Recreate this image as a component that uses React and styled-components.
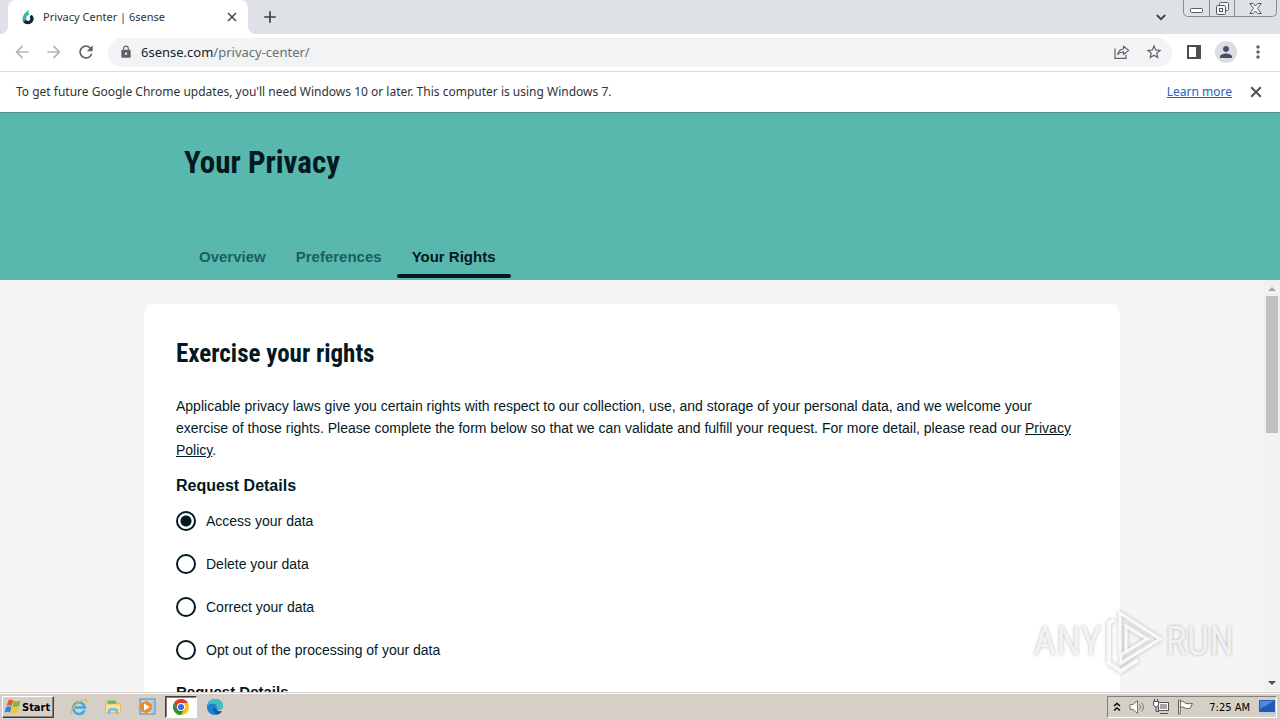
import React, { useState } from 'react';
import styled, { createGlobalStyle } from 'styled-components';
import {
    MdAdd,
    MdArrowBack,
    MdArrowForward,
    MdLock,
    MdMoreVert,
    MdPerson,
    MdRefresh,
    MdStarBorder
} from 'react-icons/md';

const UI_FONT = '"Noto Sans", "Open Sans", sans-serif';
const TASKBAR_FONT = '"DejaVu Sans Condensed", "DejaVu Sans", sans-serif';
const BODY_FONT = '"Liberation Sans", Arial, sans-serif';
const HEADING_FONT = '"Roboto Condensed", Roboto, sans-serif';

const TEAL = '#59b8ad';
const INK = '#03191f';
const CHROME_ICON = '#5f6368';
const CHROME_TEXT = '#303336';
const TASKBAR = '#d5cfc7';

const GlobalStyle = createGlobalStyle`
  *, *::before, *::after {
    box-sizing: border-box;
  }
  body {
    margin: 0;
    overflow: hidden;
  }
  button {
    padding: 0;
    border: none;
    background: none;
    font: inherit;
    color: inherit;
  }
  svg {
    display: block;
  }
`;

const Desktop = styled.div`
  position: relative;
  display: flex;
  flex-direction: column;
  height: 100vh;
  font-family: ${BODY_FONT};
  color: ${INK};
`;

/* Browser window */

const TabStrip = styled.div`
  display: flex;
  align-items: flex-start;
  flex: none;
  height: 34px;
  padding: 0 3px 0 8px;
  background: #dee1e6;
  font-family: ${UI_FONT};
`;

const BrowserTab = styled.div`
  position: relative;
  display: flex;
  align-items: center;
  gap: 8px;
  width: 240px;
  height: 34px;
  padding: 0 8px 0 13px;
  border-radius: 8px 8px 0 0;
  background: white;
  font-size: 11px;
  color: ${CHROME_TEXT};

  &::before,
  &::after {
    content: '';
    position: absolute;
    bottom: 0;
    width: 8px;
    height: 8px;
  }
  &::before {
    right: 100%;
    background: radial-gradient(circle at 0 0, transparent 8px, white 8px);
  }
  &::after {
    left: 100%;
    background: radial-gradient(circle at 100% 0, transparent 8px, white 8px);
  }
`;

const TabTitle = styled.span`
  flex: 1;
  padding-bottom: 2px;
`;

const IconButton = styled.button`
  display: flex;
  align-items: center;
  justify-content: center;
  flex: none;
  width: ${props => props.$width || 32}px;
  height: ${props => props.$height || 32}px;
  color: ${props => props.$color || CHROME_ICON};
`;

const StripSpacer = styled.div`
  flex: 1;
`;

const WindowControls = styled.div`
  display: flex;
  height: 17px;
  margin-left: 6px;
  border: 1px solid #888b92;
  border-top: none;
  border-radius: 0 0 5px 5px;

  button + button {
    border-left: 1px solid #888b92;
  }
`;

const Toolbar = styled.div`
  display: flex;
  align-items: center;
  flex: none;
  height: 38px;
  padding: 0 6px 1px;
  border-bottom: 1px solid #dadce0;
  background: white;
  font-family: ${UI_FONT};
`;

const Omnibox = styled.div`
  display: flex;
  align-items: center;
  flex: 1;
  height: 29px;
  margin: 0 6px;
  padding: 0 2px 0 11px;
  border-radius: 15px;
  background: #f1f3f4;
`;

const Address = styled.a`
  flex: 1;
  margin-left: 8px;
  font-size: 13px;
  color: #6a6e73;
  text-decoration: none;

  b {
    font-weight: 400;
    color: #202124;
  }
`;

const Avatar = styled.span`
  display: flex;
  align-items: center;
  justify-content: center;
  width: 22px;
  height: 22px;
  border-radius: 50%;
  background: #dadde2;
  color: #454e66;
`;

const InfoBar = styled.div`
  display: flex;
  align-items: center;
  flex: none;
  height: 41px;
  padding: 0 8px 0 16px;
  border-bottom: 1px solid #4f9188;
  background: white;
  font-family: ${UI_FONT};
  font-size: 12px;
  color: ${CHROME_TEXT};

  p {
    flex: 1;
    margin: 0;
    padding-bottom: 2px;
  }
  a {
    margin-right: 8px;
    padding-bottom: 2px;
    color: #2464c4;
  }
`;

/* Privacy center page */

const Header = styled.header`
  flex: none;
  padding: 30px 16px 2px;
  background: ${TEAL};
`;

const HeaderInner = styled.div`
  max-width: 912px;
  margin: 0 auto;
`;

const Title = styled.h1`
  margin: 0 0 64px;
  font-family: ${HEADING_FONT};
  font-size: 31px;
  line-height: 40px;
`;

const Tabs = styled.nav`
  display: flex;
`;

const PageTab = styled.button`
  padding: 0;
  font-size: 15px;
  font-weight: 700;
  line-height: 20px;
  color: ${props => props.$active ? INK : '#1b5f5c'};

  span {
    display: block;
    padding: 0 15px 7px;
  }
  &::after {
    content: '';
    display: block;
    height: 4px;
    border-radius: 2px;
    background: ${props => props.$active ? INK : 'transparent'};
  }
`;

const Viewport = styled.div`
  display: flex;
  flex: 1;
  min-height: 0;
`;

const Page = styled.main`
  flex: 1;
  min-width: 0;
  padding: 24px 16px 0;
  overflow: hidden;
  background: #f5f5f5;
`;

const Card = styled.section`
  max-width: 976px;
  margin: 0 auto;
  padding: 32px;
  border-radius: 10px;
  background: white;
`;

const CardTitle = styled.h2`
  margin: 0 0 23px;
  font-family: ${HEADING_FONT};
  font-size: 25px;
  line-height: 36px;
`;

const Intro = styled.p`
  margin: 0 0 15px;
  font-size: 14px;
  line-height: 22px;

  a {
    color: inherit;
  }
`;

const Options = styled.fieldset`
  display: flex;
  flex-direction: column;
  gap: 23px;
  margin: 0 0 22px;
  padding: 0;
  border: none;
`;

const SectionTitle = styled.legend`
  margin: 0 0 15px;
  padding: 0;
  font-size: ${props => props.$small ? 15 : 16}px;
  font-weight: 700;
  line-height: 20px;
`;

const Option = styled.label`
  display: flex;
  align-items: center;
  gap: 10px;
  font-size: 14px;
  line-height: 20px;
`;

const Radio = styled.input`
  flex: none;
  appearance: none;
  width: 20px;
  height: 20px;
  margin: 0;
  border: 2px solid ${INK};
  border-radius: 50%;
  background: ${props => props.checked ? `radial-gradient(circle, ${INK} 5px, white 6px)` : 'white'};
`;

const ScrollBar = styled.div`
  display: flex;
  flex-direction: column;
  flex: none;
  width: 16px;
  background: #f1f1f1;
`;

const ScrollTrack = styled.div`
  flex: 1;
  padding: 0 2px;
`;

const ScrollThumb = styled.div`
  height: 36%;
  background: #c1c1c1;
`;

const Watermark = styled.div`
  position: absolute;
  right: 46px;
  bottom: 46px;
  display: flex;
  align-items: center;
  gap: 2px;
  font-family: ${HEADING_FONT};
  font-size: 40px;
  color: rgba(255, 255, 255, 0.8);
  text-shadow: 0 0 3px rgba(0, 0, 0, 0.3);
  pointer-events: none;

  svg {
    filter: drop-shadow(0 0 2px rgba(0, 0, 0, 0.3));
  }
`;

/* Windows taskbar */

const Taskbar = styled.footer`
  display: flex;
  align-items: center;
  flex: none;
  height: 28px;
  padding: 1px 3px 0 2px;
  border-top: 1px solid #d5cfc7;
  box-shadow: inset 0 1px white;
  background: ${TASKBAR};
  font-family: ${TASKBAR_FONT};
  font-size: 12px;
  color: black;
`;

const StartButton = styled.button`
  display: flex;
  align-items: center;
  gap: 1px;
  height: 22px;
  margin-right: 8px;
  padding: 0 3px 0 1px;
  border: 1px solid;
  border-color: white #404040 #404040 white;
  box-shadow: inset -1px -1px #868078;
  font-weight: 700;
  font-size: 11px;
`;

const TaskButton = styled.button`
  display: flex;
  align-items: center;
  justify-content: center;
  width: ${props => props.$active ? 32 : 34}px;
  height: 22px;
  margin: ${props => props.$active ? '0 1px' : '0'};
  border: 1px solid transparent;
  ${props => props.$active && `
    border-color: #404040 white white #404040;
    box-shadow: inset 1px 1px #868078;
    background: white;
  `}
`;

const Tray = styled.div`
  display: flex;
  align-items: center;
  gap: 7px;
  height: 22px;
  padding: 0 1px 0 5px;
  border: 1px solid;
  border-color: #868078 white white #868078;
`;

const Clock = styled.time`
  margin: 0 2px 0 8px;
  font-size: 11px;
`;

const Favicon = () => (
    <svg width="14" height="16" viewBox="0 0 14 16" aria-hidden="true">
        <path d="M8.500 0.500C4 3 2 6 1.500 9.500C1.300 11 1.600 12.300 2.300 13.300L5.500 10.600C4.600 8.500 6 6.200 8.800 5.500C6.800 4.300 7.200 2.300 8.500 0.500Z" fill="#35b5a5" />
        <path d="M2.300 13.200C5 16.200 9.800 15.700 11.800 12.500C13.300 10 12.700 7.200 10.500 5.800L8.500 8C9.700 9 9.500 11.300 7.700 11.900C6.300 12.200 5.300 11.600 5 10.500Z" fill="#12213d" />
    </svg>
);

const ShareIcon = () => (
    <svg width="16" height="16" viewBox="0 0 16 16" fill="none" stroke={CHROME_ICON} strokeWidth="1.200" aria-hidden="true">
        <path d="M1 4.500V14.400H12V11" />
        <path d="M3.800 10.500C4.200 7 6.300 5.200 9.500 5V2.200L14.700 6.400L9.500 10.500V7.900C7 7.900 5.300 8.600 3.800 10.500Z" strokeLinejoin="round" />
    </svg>
);

const SidePanelIcon = () => (
    <svg width="14" height="14" viewBox="0 0 14 14" aria-hidden="true">
        <path fillRule="evenodd" d="M0 0H14V14H0ZM2 2V12H9V2Z" fill="#4b4e52" />
    </svg>
);

const ChevronIcon = () => (
    <svg width="10" height="7" viewBox="0 0 10 7" fill="none" stroke="#3c4043" strokeWidth="1.800" aria-hidden="true">
        <path d="M0.800 1L5 5.200L9.200 1" />
    </svg>
);

const MinimizeIcon = () => (
    <svg width="13" height="5" viewBox="0 0 13 5" aria-hidden="true">
        <rect x="0.500" y="0.500" width="12" height="4" rx="1" fill="white" stroke="#585c66" />
    </svg>
);

const RestoreIcon = () => (
    <svg width="13" height="13" viewBox="0 0 13 13" fill="#f4f5f7" stroke="#585c66" aria-hidden="true">
        <rect x="3.500" y="0.500" width="9" height="8" rx="1" />
        <rect x="0.500" y="3.500" width="9" height="9" rx="1" />
        <rect x="3.500" y="6.500" width="3" height="3" />
    </svg>
);

const WindowCloseIcon = () => (
    <svg width="13" height="11" viewBox="0 0 13 11" aria-hidden="true">
        <path d="M0.800 0.500H4.200L6.500 3L8.800 0.500H12.200L8.500 5.500L12.200 10.500H8.800L6.500 8L4.200 10.500H0.800L4.500 5.500Z" fill="#f4f5f7" stroke="#585c66" />
    </svg>
);

const CrossIcon = ({ size }) => (
    <svg width={size} height={size} viewBox="0 0 10 10" stroke="#4b4e52" strokeWidth="1.600" aria-hidden="true">
        <path d="M1 1L9 9M9 1L1 9" />
    </svg>
);

const ScrollArrow = ({ down }) => (
    <svg width="16" height="16" viewBox="0 0 16 16" aria-hidden="true">
        <path d={down ? 'M4 5H12L8 9Z' : 'M4 11H12L8 7Z'} fill={down ? '#505050' : '#a3a3a3'} />
    </svg>
);

const WindowsLogo = () => (
    <svg width="17" height="16" viewBox="0 0 17 16" aria-hidden="true">
        <path d="M4.500 1.200C6.300 0.200 7.800 0.500 9.300 1.400L7.800 7C6.200 6 4.500 5.900 2.600 6.900Z" fill="#ea5a28" />
        <path d="M10 1.800C12 2.800 14 2.700 16.600 1.300L15.100 7C12.800 8.200 10.600 8.400 8.500 7.400Z" fill="#7fb93a" />
        <path d="M2.200 7.900C4 7 5.800 7.200 7.500 8L6 13.600C4.300 12.700 2.500 12.500 0.500 13.500Z" fill="#2f86d6" />
        <path d="M8.300 8.400C10.400 9.400 12.600 9.300 14.800 8L13.400 13.700C11 15 8.800 15 6.800 14Z" fill="#f7c22d" />
    </svg>
);

const ExplorerLogo = () => (
    <svg width="18" height="18" viewBox="0 0 18 18" fill="none" aria-hidden="true">
        <path d="M14.500 12.200A5.800 5.800 0 1 1 14.800 9.500H5" stroke="#3fa9e3" strokeWidth="2.600" />
        <path d="M1.500 15.500C-0.500 12.500 6 5 12 2.300C16 0.700 17.500 2 16 5" stroke="#e9b93a" strokeWidth="1.300" />
    </svg>
);

const FolderLogo = () => (
    <svg width="18" height="18" viewBox="0 0 18 18" aria-hidden="true">
        <path d="M2 3H7L8 4.500H15V13H2Z" fill="#e8c565" />
        <path d="M4 2.500H12V6H4Z" fill="#72b56a" />
        <path d="M1.500 6H16.500V14.500H1.500Z" fill="#f8e39a" stroke="#d9b04d" strokeWidth="0.600" />
        <path d="M4 16V11.500C4 9.500 14 9.500 14 11.500V16H11.500V12.800H6.500V16Z" fill="#79bde9" />
    </svg>
);

const PlayerLogo = () => (
    <svg width="18" height="18" viewBox="0 0 18 18" aria-hidden="true">
        <rect x="2" y="1" width="15" height="15" fill="#a9cdec" stroke="#5c8cba" />
        <rect x="4" y="3" width="9" height="12" fill="#dcebf7" />
        <circle cx="8" cy="9" r="6" fill="#f28a1c" />
        <path d="M6 5.500L12 9L6 12.500Z" fill="white" />
    </svg>
);

const ChromeLogo = () => (
    <svg width="16" height="16" viewBox="0 0 16 16" aria-hidden="true">
        <circle cx="8" cy="8" r="8" fill="#fbc116" />
        <path d="M1.070 4A8 8 0 0 1 14.930 4H8A4 4 0 0 0 4.540 10Z" fill="#e33b2e" />
        <path d="M1.070 4A8 8 0 0 0 8 16L11.460 10A4 4 0 0 1 4.540 10Z" fill="#229342" />
        <circle cx="8" cy="8" r="4" fill="white" />
        <circle cx="8" cy="8" r="3.100" fill="#2f75e8" />
    </svg>
);

const EdgeLogo = () => (
    <svg width="16" height="16" viewBox="0 0 16 16" aria-hidden="true">
        <path d="M0 8C0 3.500 3.500 0 8 0C12.700 0 16 3.300 16 7C16 9.300 14.300 10.800 12 10.800C10.800 10.800 9.600 10.500 9.500 9.900C9.500 11.500 11.800 12.700 14.800 11.900C13.600 14.500 11 16 8 16C3.500 16 0 12.500 0 8Z" fill="#1b7fd4" />
        <path d="M0.300 7C1.200 2.800 4.300 0 8 0C13 0 16 3.500 16 7C16 9.500 14.200 10.800 12 10.800C10 10.800 9 10 9.600 9C10.500 7.500 9.300 5 6.300 4.800C3.500 4.600 1.300 5.500 0.300 7Z" fill="#3fbfc0" />
        <path d="M6.300 8.500C5.500 12 8 14.700 11 15.200C12.800 14.500 14.200 13.200 14.800 11.900C11.800 12.700 9.500 11.500 9.400 9.500C8 9.800 7.500 8.500 6.300 8.500Z" fill="#1459a8" />
    </svg>
);

const TrayArrows = () => (
    <svg width="9" height="10" viewBox="0 0 9 10" fill="none" stroke="black" strokeWidth="1.400" aria-hidden="true">
        <path d="M1 4L4 1.500L7 4M1 8.500L4 6L7 8.500" />
    </svg>
);

const SpeakerIcon = () => (
    <svg width="17" height="16" viewBox="0 0 17 16" fill="none" stroke="#77746f" aria-hidden="true">
        <path d="M1 5.500H4L8.500 1.500V14.500L4 10.500H1Z" fill="#f8f8f6" />
        <path d="M10.500 5.500C11.700 7 11.700 9 10.500 10.500M12.500 3.500C15 6 15 10 12.500 12.500" />
    </svg>
);

const NetworkIcon = () => (
    <svg width="17" height="16" viewBox="0 0 17 16" fill="none" stroke="#55524e" aria-hidden="true">
        <rect x="5.500" y="3.500" width="10" height="8" fill="white" />
        <rect x="7" y="5" width="7" height="5" fill="#a5a5a5" stroke="none" />
        <path d="M7 14.500H15M3 8V12.500H6" />
        <path d="M0.500 2.500H5.500V6L4 8H2L0.500 6ZM1.500 0V2.500M4.500 0V2.500" fill="white" />
    </svg>
);

const FlagIcon = () => (
    <svg width="17" height="16" viewBox="0 0 17 16" fill="#fbfbf9" stroke="#68655f" aria-hidden="true">
        <path d="M3 2.500C6 1.500 7 3 9 4.500C11 5 13 4.500 15.500 4.500L13 9.500C10.500 9.800 8.500 9.500 7 8.500C5.500 7.700 4.500 8 3 8.500Z" />
        <path d="M1.500 1H3.300V15H1.500Z" />
    </svg>
);

const DesktopIcon = () => (
    <svg width="16" height="14" viewBox="0 0 16 14" aria-hidden="true">
        <rect width="16" height="12" rx="1" fill="#2159ae" />
        <path d="M1 1H15L1 9Z" fill="#498bdc" />
        <path d="M0 12H16V14H0Z" fill="#b5cbe4" />
    </svg>
);

const PlayMark = () => (
    <svg width="60" height="66" viewBox="0 0 60 66" fill="none" stroke="rgba(255,255,255,0.85)" strokeWidth="4" aria-hidden="true">
        <path d="M10 12L5 15V55L17 63L34 52" />
        <path d="M16 47V5L56 31L17 55V47L43 31L22 18V44" strokeWidth="3" />
    </svg>
);

const TABS = ['Overview', 'Preferences', 'Your Rights'];

const REQUESTS = [
    'Access your data',
    'Delete your data',
    'Correct your data',
    'Opt out of the processing of your data'
];

const Browser = () => (
    <>
        <TabStrip>
            <BrowserTab>
                <Favicon />
                <TabTitle>Privacy Center | 6sense</TabTitle>
                <IconButton $width={16} $height={16} aria-label="Close tab"><CrossIcon size={10} /></IconButton>
            </BrowserTab>
            <IconButton $width={44} $height={34} $color="#3c4043" aria-label="New tab"><MdAdd size={20} /></IconButton>
            <StripSpacer />
            <IconButton $width={32} $height={34} aria-label="Search tabs"><ChevronIcon /></IconButton>
            <WindowControls>
                <IconButton $width={25} $height={20} aria-label="Minimize"><MinimizeIcon /></IconButton>
                <IconButton $width={25} $height={16} aria-label="Restore"><RestoreIcon /></IconButton>
                <IconButton $width={42} $height={16} aria-label="Close"><WindowCloseIcon /></IconButton>
            </WindowControls>
        </TabStrip>
        <Toolbar>
            <IconButton $color="#b4b6b9" aria-label="Back"><MdArrowBack size={20} /></IconButton>
            <IconButton $color="#b4b6b9" aria-label="Forward"><MdArrowForward size={20} /></IconButton>
            <IconButton aria-label="Reload"><MdRefresh size={20} /></IconButton>
            <Omnibox>
                <MdLock size={14} color={CHROME_ICON} />
                <Address href="#"><b>6sense.com</b>/privacy-center/</Address>
                <IconButton aria-label="Share"><ShareIcon /></IconButton>
                <IconButton aria-label="Bookmark"><MdStarBorder size={18} /></IconButton>
            </Omnibox>
            <IconButton aria-label="Side panel"><SidePanelIcon /></IconButton>
            <IconButton aria-label="Profile"><Avatar><MdPerson size={18} /></Avatar></IconButton>
            <IconButton aria-label="Menu"><MdMoreVert size={20} /></IconButton>
        </Toolbar>
        <InfoBar>
            <p>To get future Google Chrome updates, you'll need Windows 10 or later. This computer is using Windows 7.</p>
            <a href="#">Learn more</a>
            <IconButton aria-label="Dismiss"><CrossIcon size={12} /></IconButton>
        </InfoBar>
    </>
);

const PrivacyCenter = () => {
    const [request, setRequest] = useState(REQUESTS[0]);

    return (
        <>
            <Header>
                <HeaderInner>
                    <Title>Your Privacy</Title>
                    <Tabs>
                        {TABS.map(tab => (
                            <PageTab key={tab} $active={tab === 'Your Rights'}><span>{tab}</span></PageTab>
                        ))}
                    </Tabs>
                </HeaderInner>
            </Header>
            <Viewport>
                <Page>
                    <Card>
                        <CardTitle>Exercise your rights</CardTitle>
                        <Intro>
                            Applicable privacy laws give you certain rights with respect to our collection, use, and storage of your personal data, and we welcome your<br />
                            exercise of those rights. Please complete the form below so that we can validate and fulfill your request. For more detail, please read our <a href="#">Privacy<br />Policy</a>.
                        </Intro>
                        <Options>
                            <SectionTitle>Request Details</SectionTitle>
                            {REQUESTS.map(name => (
                                <Option key={name}>
                                    <Radio
                                        type="radio"
                                        name="request"
                                        checked={request === name}
                                        onChange={() => setRequest(name)}
                                    />
                                    {name}
                                </Option>
                            ))}
                        </Options>
                        <Options>
                            <SectionTitle $small>Request Details</SectionTitle>
                        </Options>
                    </Card>
                </Page>
                <ScrollBar>
                    <ScrollArrow />
                    <ScrollTrack><ScrollThumb /></ScrollTrack>
                    <ScrollArrow down />
                </ScrollBar>
            </Viewport>
        </>
    );
};

const WindowsTaskbar = () => (
    <Taskbar>
        <StartButton><WindowsLogo />Start</StartButton>
        <TaskButton aria-label="Internet Explorer"><ExplorerLogo /></TaskButton>
        <TaskButton aria-label="Files"><FolderLogo /></TaskButton>
        <TaskButton aria-label="Media Player"><PlayerLogo /></TaskButton>
        <TaskButton $active aria-label="Chrome"><ChromeLogo /></TaskButton>
        <TaskButton aria-label="Edge"><EdgeLogo /></TaskButton>
        <StripSpacer />
        <Tray>
            <TrayArrows />
            <SpeakerIcon />
            <NetworkIcon />
            <FlagIcon />
            <Clock>7:25 AM</Clock>
            <DesktopIcon />
        </Tray>
    </Taskbar>
);

const App = () => (
    <Desktop>
        <GlobalStyle />
        <Browser />
        <PrivacyCenter />
        <WindowsTaskbar />
        <Watermark>
            <span>ANY</span>
            <PlayMark />
            <span>RUN</span>
        </Watermark>
    </Desktop>
);

export default App;
